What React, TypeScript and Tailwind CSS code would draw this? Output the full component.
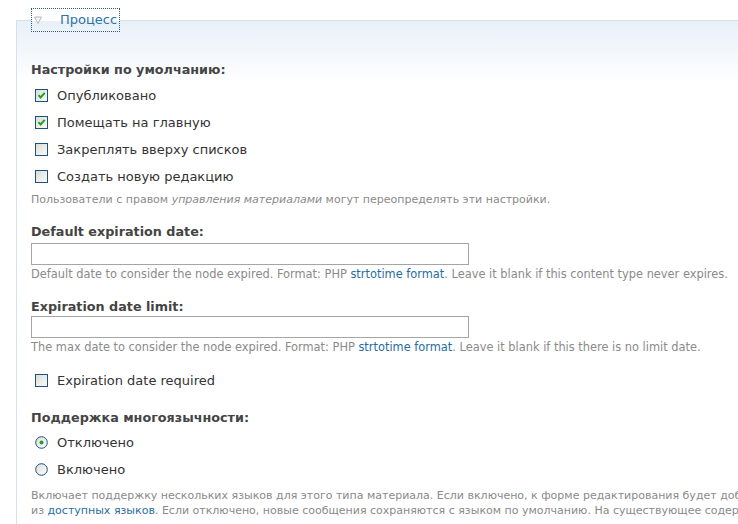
import React from 'react';

const font = { fontFamily: '"DejaVu Sans", Verdana, sans-serif' };

const CheckBox: React.FC<{ checked?: boolean }> = ({ checked = false }) => (
    <span className="relative inline-block size-[13px] shrink-0 border border-[#1c5180] bg-gradient-to-br from-[#dcdcd6] to-[#fbfbf9]">
        {checked && (
            <svg viewBox="0 0 11 11" className="absolute left-0 top-0 size-[11px]">
                <path d="M2.5 5.2 L4.6 7.5 L8.7 2.8" fill="none" stroke="#21a121" strokeWidth="2" />
            </svg>
        )}
    </span>
);

const Radio: React.FC<{ checked?: boolean }> = ({ checked = false }) => (
    <svg viewBox="0 0 13 13" className="size-[13px] shrink-0">
        <defs>
            <linearGradient id="rg" x1="0" y1="0" x2="1" y2="1">
                <stop offset="0" stopColor="#dcdcd6" />
                <stop offset="1" stopColor="#ffffff" />
            </linearGradient>
        </defs>
        <circle cx="6.5" cy="6.5" r="5.8" fill="url(#rg)" stroke="#1c5180" strokeWidth="1" />
        {checked && <circle cx="6.5" cy="6.5" r="2" fill="#21a121" />}
    </svg>
);

const CheckRow: React.FC<{ label: string; checked?: boolean; radio?: boolean }> = ({ label, checked, radio }) => (
    <div className="flex h-[27px] items-center pl-[4px]">
        {radio ? <Radio checked={checked} /> : <CheckBox checked={checked} />}
        <span className="ml-[9px] text-[13px] text-[#333]">{label}</span>
    </div>
);

const Heading: React.FC<{ children: React.ReactNode }> = ({ children }) => (
    <div className="text-[12.75px] font-bold leading-[17px] text-[#444]">{children}</div>
);

const Desc: React.FC<{ children: React.ReactNode; latin?: boolean }> = ({ children, latin }) => (
    <div
        className={`whitespace-nowrap leading-[15px] text-[#8a8a8a] ${latin ? 'text-[11.4px]' : 'text-[11px]'}`}
    >
        {children}
    </div>
);

const Link: React.FC<{ children: React.ReactNode }> = ({ children }) => (
    <a className="text-[#1f6e9f]">{children}</a>
);

const TextField: React.FC = () => (
    <input type="text" className="block h-[22px] w-[438px] border border-[#a5a5a5] bg-white" />
);

export default function App() {
    return (
        <div style={font} className="h-[524px] w-[738px] overflow-hidden bg-white pl-[16px] pt-[8px]">
            <fieldset className="w-[760px] border border-r-0 border-[#d5e0ec] bg-gradient-to-b from-[#e8f0f8] via-white via-[12%] to-white pl-[14px] pb-6">
                <legend className="flex h-[24px] w-[89px] items-center border border-dotted border-[#2c5d80] pl-[2px]">
                    <svg viewBox="0 0 8 8" className="size-[8px]">
                        <path d="M0.5 1 L7.5 1 L4 7.5 Z" fill="#f4f4f4" stroke="#b8b8b8" strokeWidth="1" />
                    </svg>
                    <span className="ml-[18px] text-[13px] text-[#2a73a4]">Процесс</span>
                </legend>

                <div className="mt-[29px]">
                    <Heading>Настройки по умолчанию:</Heading>
                    <div className="mt-[4px]">
                        <CheckRow label="Опубликовано" checked />
                        <CheckRow label="Помещать на главную" checked />
                        <CheckRow label="Закреплять вверху списков" />
                        <CheckRow label="Создать новую редакцию" />
                    </div>
                    <div className="mt-[2px]">
                        <Desc>
                            Пользователи с правом <em>управления материалами</em> могут переопределять эти настройки.
                        </Desc>
                    </div>
                </div>

                <div className="mt-[16px]">
                    <Heading>Default expiration date:</Heading>
                    <div className="mt-[3px]">
                        <TextField />
                    </div>
                    <div className="mt-[2px]">
                        <Desc latin>
                            Default date to consider the node expired. Format: PHP <Link>strtotime format</Link>. Leave
                            it blank if this content type never expires.
                        </Desc>
                    </div>
                </div>

                <div className="mt-[16px]">
                    <Heading>Expiration date limit:</Heading>
                    <div className="mt-[1px]">
                        <TextField />
                    </div>
                    <div className="mt-[2px]">
                        <Desc latin>
                            The max date to consider the node expired. Format: PHP <Link>strtotime format</Link>. Leave
                            it blank if this there is no limit date.
                        </Desc>
                    </div>
                </div>

                <div className="mt-[12px]">
                    <CheckRow label="Expiration date required" />
                </div>

                <div className="mt-[15px]">
                    <Heading>Поддержка многоязычности:</Heading>
                    <div className="mt-[3px]">
                        <CheckRow label="Отключено" checked radio />
                        <CheckRow label="Включено" radio />
                    </div>
                    <div className="mt-[5px]">
                        <Desc>
                            Включает поддержку нескольких языков для этого типа материала. Если включено, к форме
                            редактирования будет добавлен выбор языка.
                        </Desc>
                        <Desc>
                            из <Link>доступных языков</Link>. Если отключено, новые сообщения сохраняются с языком по
                            умолчанию. На существующее содержимое это не влияет.
                        </Desc>
                    </div>
                </div>
            </fieldset>
        </div>
    );
}
